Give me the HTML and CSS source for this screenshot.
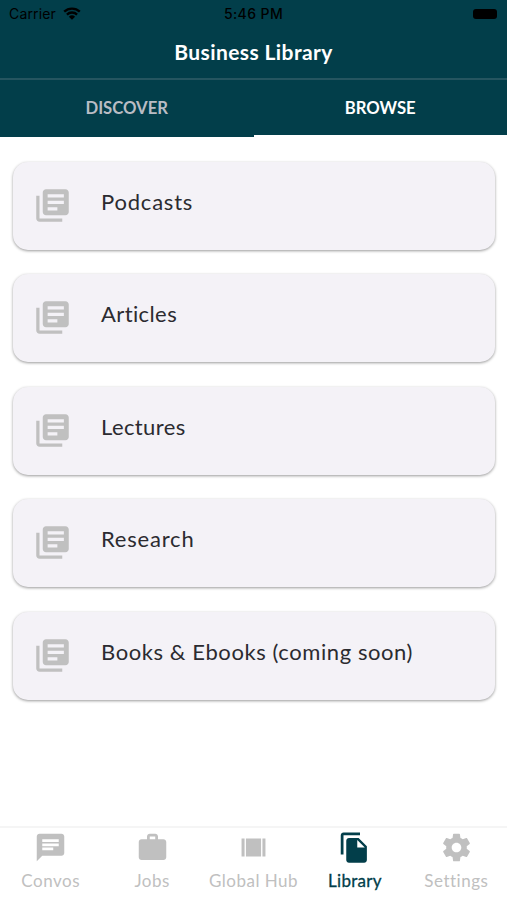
FILE: index.html
```html
<!DOCTYPE html>
<html lang="en">
<head>
    <meta charset="UTF-8">
    <meta name="viewport" content="width=device-width, initial-scale=1.0">
    <title>Business Library</title>
    <link rel="stylesheet" href="styles.css">
</head>
<body>
    <svg width="0" height="0" class="sprite">
        <symbol id="books" viewBox="0 0 24 24">
            <path d="M4 6H2v14c0 1.100.9 2 2 2h14v-2H4V6zm16-4H8c-1.100 0-2 .9-2 2v12c0 1.100.9 2 2 2h12c1.100 0 2-.9 2-2V4c0-1.100-.9-2-2-2zm-1 9H9V9h10v2zm-4 4H9v-2h6v2zm4-8H9V5h10v2z"/>
        </symbol>
    </svg>

    <header class="header">
        <div class="status">
            <div class="carrier">
                <span class="carrier-name">Carrier</span>
                <svg class="wifi" viewBox="0 0 18 13">
                    <path d="M1.200 4.700a11.200 11.200 0 0 1 15.600 0M3.900 7.600a7.300 7.300 0 0 1 10.200 0" fill="none" stroke="#000" stroke-width="2.300"/>
                    <path d="M9 12.800L5.900 9.700a4.500 4.500 0 0 1 6.200 0z"/>
                </svg>
            </div>
            <span class="time">5:46 PM</span>
            <div class="battery-wrap"><div class="battery"></div></div>
        </div>
        <h1 class="title">Business Library</h1>
        <div class="tabs">
            <div class="tab">DISCOVER</div>
            <div class="tab active">BROWSE</div>
        </div>
    </header>

    <main class="list">
        <div class="card"><svg class="card-icon"><use href="#books"/></svg><span class="card-text wide">Podcasts</span></div>
        <div class="card"><svg class="card-icon"><use href="#books"/></svg><span class="card-text">Articles</span></div>
        <div class="card"><svg class="card-icon"><use href="#books"/></svg><span class="card-text">Lectures</span></div>
        <div class="card"><svg class="card-icon"><use href="#books"/></svg><span class="card-text wide">Research</span></div>
        <div class="card"><svg class="card-icon"><use href="#books"/></svg><span class="card-text long">Books &amp; Ebooks (coming soon)</span></div>
    </main>

    <nav class="nav">
        <div class="nav-item">
            <svg viewBox="0 0 24 24"><path d="M20 2H4c-1.100 0-1.990.9-1.990 2L2 22l4-4h14c1.100 0 2-.9 2-2V4c0-1.100-.9-2-2-2zM6 9h12v2H6V9zm8 5H6v-2h8v2zm4-6H6V6h12v2z"/></svg>
            <span>Convos</span>
        </div>
        <div class="nav-item">
            <svg viewBox="0 0 24 24"><path d="M20 6h-4V4c0-1.110-.89-2-2-2h-4c-1.110 0-2 .89-2 2v2H4c-1.110 0-1.990.89-1.990 2L2 19c0 1.110.89 2 2 2h16c1.110 0 2-.89 2-2V8c0-1.110-.89-2-2-2zm-6 0h-4V4h4v2z"/></svg>
            <span>Jobs</span>
        </div>
        <div class="nav-item">
            <svg viewBox="0 0 24 24"><path d="M3.300 5.500h2.200v13H3.300zM6.500 5.500h11v13h-11zM18.500 5.500h2.200v13h-2.200z"/></svg>
            <span>Global Hub</span>
        </div>
        <div class="nav-item selected">
            <svg viewBox="0 0 24 24"><path d="M16 1H4c-1.100 0-2 .9-2 2v14h2V3h12V1zm-1 4l6 6v10c0 1.100-.9 2-2 2H7.990C6.890 23 6 22.100 6 21l.01-14c0-1.100.89-2 1.990-2h7zm-1 7h5.500L14 6.500V12z"/></svg>
            <span>Library</span>
        </div>
        <div class="nav-item">
            <svg viewBox="0 0 24 24"><path d="M19.430 12.980c.04-.32.07-.64.07-.98s-.03-.66-.07-.98l2.110-1.650c.19-.15.24-.42.12-.64l-2-3.460c-.12-.22-.39-.3-.61-.22l-2.490 1c-.52-.4-1.080-.73-1.690-.98l-.38-2.650C14.460 2.180 14.250 2 14 2h-4c-.25 0-.46.18-.49.42l-.38 2.650c-.61.25-1.170.59-1.690.98l-2.490-1c-.23-.09-.49 0-.61.22l-2 3.460c-.13.22-.07.49.12.64l2.110 1.650c-.04.32-.07.65-.07.98s.03.66.07.98l-2.110 1.650c-.19.15-.24.42-.12.64l2 3.460c.12.22.39.3.61.22l2.490-1c.52.4 1.080.73 1.690.98l.38 2.650c.03.24.24.42.49.42h4c.25 0 .46-.18.49-.42l.38-2.650c.61-.25 1.170-.59 1.690-.98l2.490 1c.23.09.49 0 .61-.22l2-3.460c.12-.22.07-.49-.12-.64l-2.110-1.650zM12 15.500c-1.930 0-3.500-1.570-3.500-3.500s1.570-3.500 3.500-3.500 3.500 1.570 3.500 3.500-1.570 3.500-3.500 3.500z"/></svg>
            <span>Settings</span>
        </div>
    </nav>
</body>
</html>
```
FILE: styles.css
```css
* {
    box-sizing: border-box;
}

body {
    margin: 0;
    height: 900px;
    display: flex;
    flex-direction: column;
    background-color: #fff;
    font-family: Lato, sans-serif;
    overflow: hidden;
}

.sprite {
    position: absolute;
}

.header {
    background-color: #023e4a;
    height: 137px;
}

.status {
    display: grid;
    grid-template-columns: 1fr auto 1fr;
    align-items: center;
    height: 27px;
    padding: 0 9px;
    font-family: Inter, sans-serif;
    font-size: 14px;
    color: #000;
}

.carrier {
    display: flex;
    align-items: center;
    gap: 7px;
}

.carrier-name {
    letter-spacing: 0.150px;
}

.wifi {
    width: 18px;
    height: 13px;
}

.time {
    font-weight: 500;
    letter-spacing: 0.400px;
}

.battery-wrap {
    display: flex;
    justify-content: flex-end;
    padding-right: 1px;
}

.battery {
    width: 24px;
    height: 10px;
    border-radius: 3px;
    background-color: #000;
}

.title {
    margin: 0;
    height: 51px;
    line-height: 50px;
    text-align: center;
    font-size: 21px;
    font-weight: 700;
    letter-spacing: 0.400px;
    color: #fff;
}

.tabs {
    display: flex;
    height: 59px;
    border-top: 2px solid #255560;
}

.tab {
    flex: 1;
    text-align: center;
    line-height: 56px;
    font-size: 16.700px;
    font-weight: 700;
    color: #b9bcc4;
}

.tab.active {
    color: #fff;
    border-bottom: 2px solid #fff;
}

.list {
    flex: 1;
    padding: 25px 12px 0 13px;
    display: flex;
    flex-direction: column;
    gap: 24.400px;
}

.card {
    display: flex;
    height: 88px;
    padding: 24px 20px 0;
    border-radius: 15px;
    background-color: #f4f2f7;
    box-shadow: 0 1px 3px rgba(0, 0, 0, 0.4);
}

.card-icon {
    width: 39px;
    height: 39px;
    fill: #c0c0c0;
}

.card-text {
    margin-left: 29px;
    line-height: 31px;
    font-size: 22px;
    color: #2b2b30;
    letter-spacing: 0.400px;
}

.card-text.wide {
    letter-spacing: 0.800px;
}

.card-text.long {
    letter-spacing: 0.580px;
}

.nav {
    display: flex;
    height: 74px;
    border-top: 2px solid #f5f5f5;
}

.nav-item {
    flex: 1;
    display: flex;
    flex-direction: column;
    align-items: center;
    padding-top: 3px;
    font-size: 17px;
    letter-spacing: 0.500px;
    white-space: nowrap;
    color: #c0c0c0;
}

.nav-item svg {
    width: 33px;
    height: 33px;
    fill: currentColor;
}

.nav-item span {
    margin-top: 5px;
    line-height: 23px;
}

.nav-item.selected {
    color: #023e4a;
}

.nav-item.selected span {
    letter-spacing: 0.300px;
    -webkit-text-stroke: 0.300px #023e4a;
}
```
